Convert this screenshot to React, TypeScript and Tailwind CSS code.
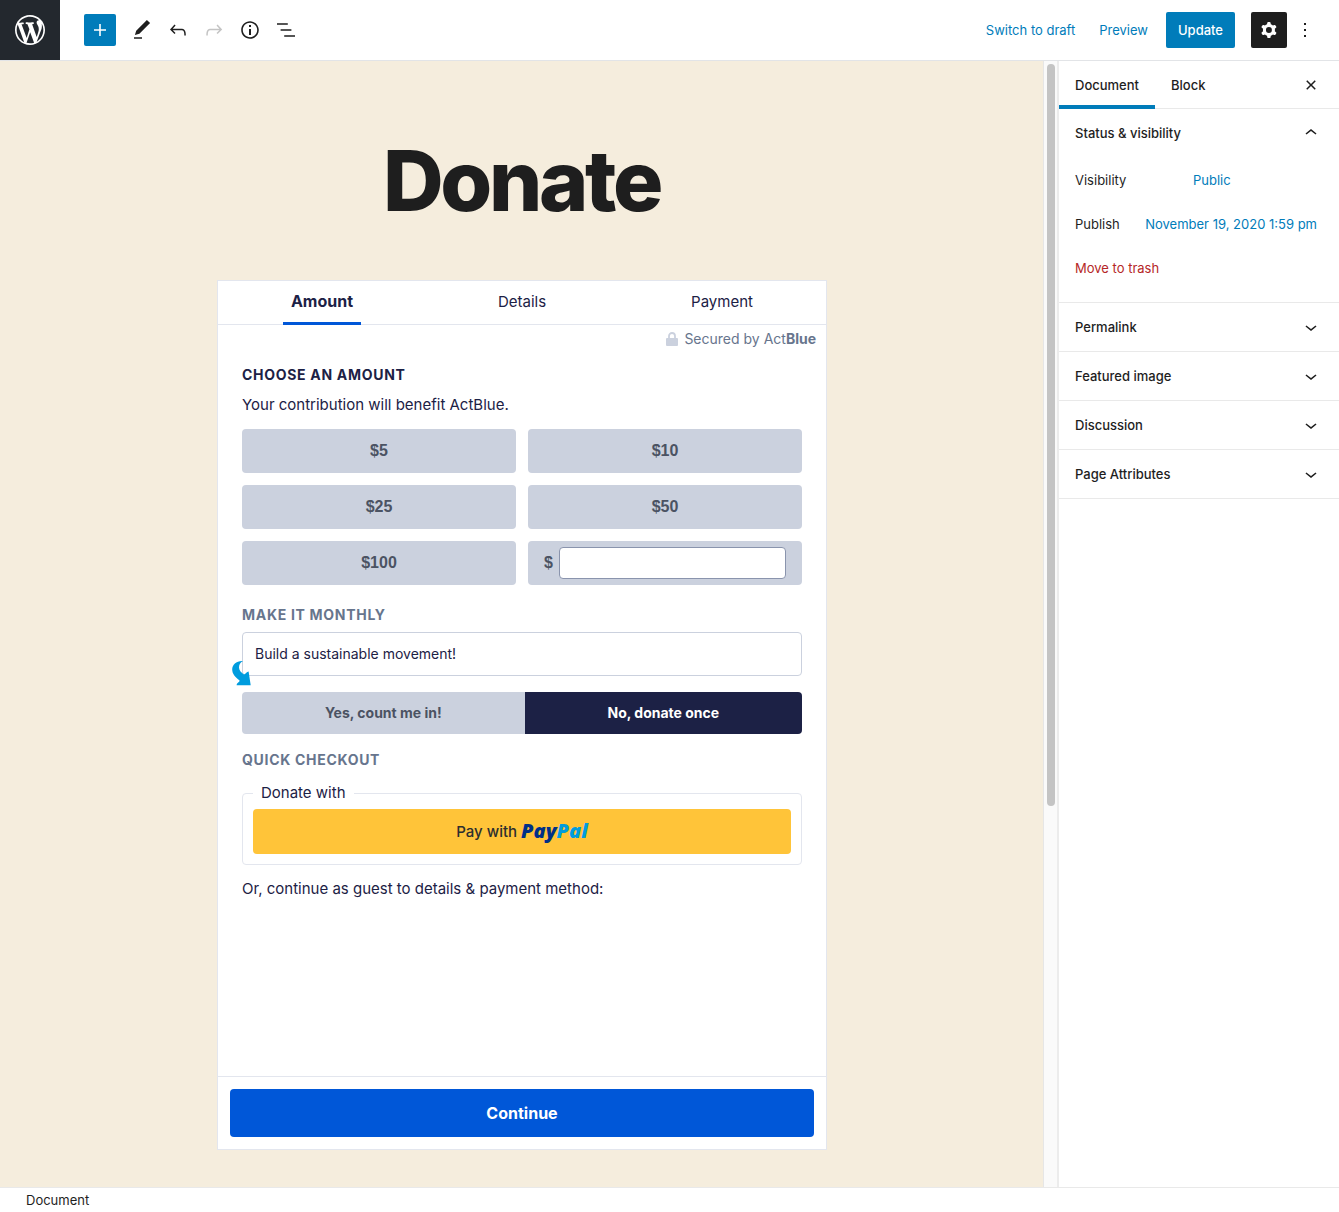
import { useState, type ReactNode } from "react";

const ICONS = {
  plus: "M18 11.2h-5.2V6h-1.6v5.2H6v1.6h5.2V18h1.6v-5.2H18z",
  edit: "M20.1 5.1L16.9 2 6.2 12.7l-1.3 4.4 4.5-1.3L20.1 5.1zM4 20.8h8v-1.5H4v1.5z",
  undo: "M18.3 11.7c-.6-.6-1.4-.9-2.3-.9H6.7l2.9-3.3-1.1-1-4.5 5L8.5 16l1-1-2.7-2.7H16c.5 0 .9.2 1.3.5 1 1 1 3.4 1 4.5v.3h1.5v-.2c0-1.5 0-4.3-1.5-5.7z",
  redo: "M15.6 6.5l-1.1 1 2.9 3.3H8c-.9 0-1.7.3-2.3.9-1.4 1.5-1.4 4.2-1.4 5.6v.2h1.5v-.3c0-1.1 0-3.5 1-4.5.3-.3.7-.5 1.3-.5h9.2L14.5 15l1.1 1.1 4.6-4.6-4.6-5z",
  info: "M12 3.2c-4.8 0-8.8 3.9-8.8 8.8 0 4.8 3.9 8.8 8.8 8.8 4.8 0 8.8-3.9 8.8-8.8 0-4.8-4-8.8-8.8-8.8zm0 16c-4 0-7.2-3.3-7.2-7.2C4.8 8 8 4.8 12 4.8s7.2 3.3 7.2 7.2c0 4-3.2 7.2-7.2 7.2zM11 17h2v-6h-2v6zm0-8h2V7h-2v2z",
  list: "M13.8 5.2H3v1.5h10.8V5.2zm-3.6 12v1.5H21v-1.5H10.2zm7.2-6H6.6v1.5h10.8v-1.5z",
  cog: "M10.289 4.836A1 1 0 0111.275 4h1.306a1 1 0 01.987.836l.244 1.466c.787.26 1.503.679 2.108 1.218l1.393-.522a1 1 0 011.216.437l.653 1.13a1 1 0 01-.23 1.273l-1.148.944a6.025 6.025 0 010 2.435l1.149.946a1 1 0 01.23 1.272l-.653 1.13a1 1 0 01-1.216.437l-1.394-.522c-.605.54-1.32.958-2.108 1.218l-.244 1.466a1 1 0 01-.987.836h-1.306a1 1 0 01-.986-.836l-.244-1.466a5.995 5.995 0 01-2.108-1.218l-1.394.522a1 1 0 01-1.217-.436l-.653-1.131a1 1 0 01.23-1.272l1.149-.946a6.026 6.026 0 010-2.435l-1.148-.944a1 1 0 01-.23-1.272l.653-1.131a1 1 0 011.217-.437l1.393.522a5.994 5.994 0 012.108-1.218l.244-1.466zM14.929 12a3 3 0 11-6 0 3 3 0 016 0z",
  more: "M13 19h-2v-2h2v2zm0-6h-2v-2h2v2zm0-6h-2V5h2v2z",
  close: "M12 13.06l3.712 3.713 1.061-1.06L13.061 12l3.712-3.712-1.06-1.06L12 10.938 8.288 7.227l-1.061 1.06L10.939 12l-3.712 3.712 1.06 1.061L12 13.061z",
  up: "M6.5 12.4L12 8l5.5 4.4-.9 1.2L12 10l-4.5 3.6-1-1.2z",
  down: "M17.5 11.6L12 16l-5.5-4.4.9-1.2L12 14l4.5-3.6 1 1.2z",
};

function Icon({ name }: { name: keyof typeof ICONS }) {
  return (
    <svg viewBox="0 0 24 24" className="size-6 shrink-0" fill="currentColor" fillRule="evenodd" aria-hidden="true">
      <path d={ICONS[name]} />
    </svg>
  );
}

function ToolButton({ name, label, className = "text-[#1e1e1e]" }: { name: keyof typeof ICONS; label: string; className?: string }) {
  return (
    <button type="button" aria-label={label} className={`flex size-9 items-center justify-center ${className}`}>
      <Icon name={name} />
    </button>
  );
}

function Header() {
  return (
    <header className="flex items-center justify-between border-b border-[#e2e4e7] bg-white text-[13px]">
      <div className="flex items-center">
        <a href="#" aria-label="View pages" className="flex size-15 items-center justify-center bg-[#23282e] text-white">
          <svg viewBox="-2 -2 24 24" className="size-9" fill="currentColor" aria-hidden="true">
            <path d="M20 10c0-5.51-4.49-10-10-10C4.48 0 0 4.49 0 10c0 5.52 4.48 10 10 10 5.51 0 10-4.48 10-10zM7.78 15.37L4.37 6.22c.55-.02 1.17-.08 1.17-.08.5-.06.44-1.13-.06-1.11 0 0-1.45.11-2.37.11-.18 0-.37 0-.58-.01C4.12 2.69 6.87 1.11 10 1.11c2.33 0 4.45.87 6.05 2.34-.68-.11-1.65.39-1.65 1.58 0 .74.45 1.36.9 2.1.35.61.55 1.36.55 2.46 0 1.49-1.4 5-1.4 5l-3.03-8.37c.54-.02.82-.17.82-.17.5-.05.44-1.25-.06-1.22 0 0-1.44.12-2.38.12-.87 0-2.33-.12-2.33-.12-.5-.03-.56 1.2-.06 1.22l.92.08 1.26 3.41zM17.41 10c.24-.64.74-1.87.43-4.25.7 1.29 1.05 2.71 1.05 4.25 0 3.29-1.73 6.24-4.4 7.78.97-2.59 1.94-5.2 2.92-7.78zM6.1 18.09C3.12 16.65 1.11 13.53 1.11 10c0-1.3.23-2.48.72-3.59C3.25 10.3 4.67 14.2 6.1 18.09zm4.03-6.63l2.58 6.98c-.86.29-1.76.45-2.71.45-.79 0-1.57-.11-2.29-.33.81-2.38 1.62-4.74 2.42-7.1z" />
          </svg>
        </a>
        <button type="button" aria-label="Add block" className="mr-2 ml-6 flex size-8 items-center justify-center rounded-xs bg-[#007cba] text-white">
          <Icon name="plus" />
        </button>
        <ToolButton name="edit" label="Tools" />
        <ToolButton name="undo" label="Undo" />
        <ToolButton name="redo" label="Redo" className="text-[#c4c4c4]" />
        <ToolButton name="info" label="Content structure" />
        <ToolButton name="list" label="Block navigation" />
      </div>
      <div className="flex items-center pr-4">
        <button type="button" className="px-3 pt-0.5 text-[#007cba]">Switch to draft</button>
        <button type="button" className="px-3 pt-0.5 text-[#007cba]">Preview</button>
        <button type="button" className="mr-4 ml-1.5 h-9 rounded-xs bg-[#007cba] px-3 pt-0.5 font-medium text-white">Update</button>
        <button type="button" aria-label="Settings" className="flex size-9 items-center justify-center rounded-xs bg-[#1e1e1e] text-white">
          <Icon name="cog" />
        </button>
        <ToolButton name="more" label="Options" />
      </div>
    </header>
  );
}

function Panel({ title, open, children }: { title: string; open?: boolean; children?: ReactNode }) {
  return (
    <section className="border-b border-[#e9e9e9]">
      <button type="button" aria-expanded={!!open} className="flex h-12 w-full items-center justify-between px-4 font-medium">
        <span className="pt-0.5">{title}</span>
        <Icon name={open ? "up" : "down"} />
      </button>
      {children}
    </section>
  );
}

function Sidebar() {
  return (
    <aside className="w-[282px] shrink-0 border-l-2 border-[#ececec] bg-white text-[13px] text-[#1e1e1e]">
      <div className="flex h-12 items-stretch border-b border-[#e9e9e9]">
        <button type="button" className="-mb-px border-b-4 border-[#007cba] px-4 pt-1.5 font-medium">Document</button>
        <button type="button" className="px-4 pt-0.5 font-medium">Block</button>
        <button type="button" aria-label="Close settings" className="mr-4 ml-auto">
          <Icon name="close" />
        </button>
      </div>
      <Panel title="Status & visibility" open>
        <dl className="flex flex-col px-4 pt-0.5">
          <div className="flex h-11 items-center">
            <dt className="w-[118px]">Visibility</dt>
            <dd><a href="#" className="text-[#007cba]">Public</a></dd>
          </div>
          <div className="flex h-11 items-center justify-between pr-1.5">
            <dt>Publish</dt>
            <dd><a href="#" className="whitespace-nowrap text-[#007cba]">November 19, 2020 1:59 pm</a></dd>
          </div>
        </dl>
        <button type="button" className="mb-[11px] h-11 px-4 text-[#b52727]">Move to trash</button>
      </Panel>
      <Panel title="Permalink" />
      <Panel title="Featured image" />
      <Panel title="Discussion" />
      <Panel title="Page Attributes" />
    </aside>
  );
}

const amounts = ["$5", "$10", "$25", "$50", "$100"];
const steps = ["Amount", "Details", "Payment"];

function DonationForm() {
  const [custom, setCustom] = useState("");
  return (
    <section className="flex w-full max-w-[610px] flex-col border border-[#e3e6ee] bg-white text-[#1c2145]">
      <nav className="grid h-11 grid-cols-3 border-b border-[#e3e6ee] px-1">
        {steps.map((step, i) => (
          <a
            key={step}
            href="#"
            className={
              i === 0
                ? "-mb-px justify-self-center border-b-3 border-[#0057d8] px-2 pt-2 text-base font-bold"
                : "justify-self-center px-2 pt-[9px]"
            }
          >
            {step}
          </a>
        ))}
      </nav>
      <p className="flex items-center justify-end gap-1.5 px-2.5 pt-1 text-sm text-[#67758d]">
        <svg viewBox="0 0 12 14" className="h-3.5 w-3" aria-hidden="true">
          <rect y="6" width="12" height="8" rx="1" fill="#cbd1de" />
          <path d="M3 7V4a3 3 0 0 1 6 0v3" fill="none" stroke="#cbd1de" strokeWidth="1.8" />
        </svg>
        <span>Secured by Act<b>Blue</b></span>
      </p>
      <div className="flex flex-col px-6">
        <h2 className="mt-4 text-sm font-bold tracking-wider">CHOOSE AN AMOUNT</h2>
        <p className="mt-2">Your contribution will benefit ActBlue.</p>
        <div className="mt-3 grid grid-cols-2 gap-3 font-['Liberation_Sans',sans-serif] text-base font-bold text-[#4b5363]">
          {amounts.map((a) => (
            <button key={a} type="button" className="h-11 rounded-sm bg-[#cbd1de]">{a}</button>
          ))}
          <label className="flex h-11 items-center gap-1.5 rounded-sm bg-[#cbd1de] px-4">
            $
            <input
              aria-label="Other amount"
              value={custom}
              onChange={(e) => setCustom(e.target.value)}
              className="h-8 min-w-0 flex-1 rounded-sm border border-[#8a94ad] bg-white px-2"
            />
          </label>
        </div>
        <h2 className="mt-5 text-sm font-bold tracking-wider text-[#67758d]">MAKE IT MONTHLY</h2>
        <div className="relative mt-[7px] flex h-11 items-center rounded-sm border border-[#cbd1de] px-3 text-sm">
          Build a sustainable movement!
          <svg viewBox="0 0 19 25" className="absolute top-7 -left-[11px] h-[25px] w-[19px]" aria-hidden="true">
            <path
              d="M11 0C8.2 1.4 7 4 7 6.4C7 9.4 9.4 11.6 12 13.4C14 12.8 14.6 10.6 16.6 10.4L18.7 24.2H4.6C5 21.8 7.6 21.4 7.6 19.6C3.4 16.4.2 13 .2 8.6C.2 3.6 4.6-.2 11 0z"
              fill="#009cde"
            />
          </svg>
        </div>
        <div className="mt-4 flex h-[42px] overflow-hidden rounded-sm text-sm font-bold">
          <button type="button" className="flex-auto bg-[#cbd1de] text-[#4b5363]">Yes, count me in!</button>
          <button type="button" className="flex-auto bg-[#1c2145] text-white">No, donate once</button>
        </div>
        <h2 className="mt-4 text-sm font-bold tracking-wider text-[#67758d]">QUICK CHECKOUT</h2>
        <fieldset className="mt-[11px] rounded-sm border border-[#e3e6ee] px-2.5 pb-2.5">
          <legend className="px-2">Donate with</legend>
          <button type="button" className="mt-1 flex h-[45px] w-full items-center justify-center gap-1 rounded-sm bg-[#ffc439] font-medium text-[#2c2e2f]">
            Pay with
            <span className="pb-0.5 font-['Open_Sans',sans-serif] text-xl font-extrabold text-[#003087] italic">
              Pay<span className="text-[#009cde]">Pal</span>
            </span>
          </button>
        </fieldset>
        <p className="mt-3">Or, continue as guest to details &amp; payment method:</p>
      </div>
      <div className="mt-[175px] border-t border-[#e3e6ee] p-3">
        <button type="button" className="h-12 w-full rounded-sm bg-[#0057d8] text-base font-bold text-white">Continue</button>
      </div>
    </section>
  );
}

export default function App() {
  return (
    <div className="flex min-h-screen flex-col bg-white font-['Inter',sans-serif]">
      <Header />
      <div className="flex flex-1">
        <main className="flex flex-1 flex-col items-center bg-[#f5eddd] pb-9 text-[15px] leading-6">
          <h1 className="pt-20 text-[84px] leading-20 font-extrabold tracking-[-0.04em] text-[#1e1e1e]">Donate</h1>
          <div className="mt-[59px] flex w-full justify-center pl-px">
            <DonationForm />
          </div>
        </main>
        <div className="w-[14px] shrink-0 border-l border-[#e6e6e6] bg-[#fafafa] pt-[3px] pl-[3px]">
          <div className="h-[742px] w-2 rounded-full bg-[#c4c4c4]" />
        </div>
        <Sidebar />
      </div>
      <footer className="flex h-[25px] items-center border-t border-[#e9e9e9] pt-0.5 pl-[26px] text-[13px] text-[#1e1e1e]">Document</footer>
    </div>
  );
}
